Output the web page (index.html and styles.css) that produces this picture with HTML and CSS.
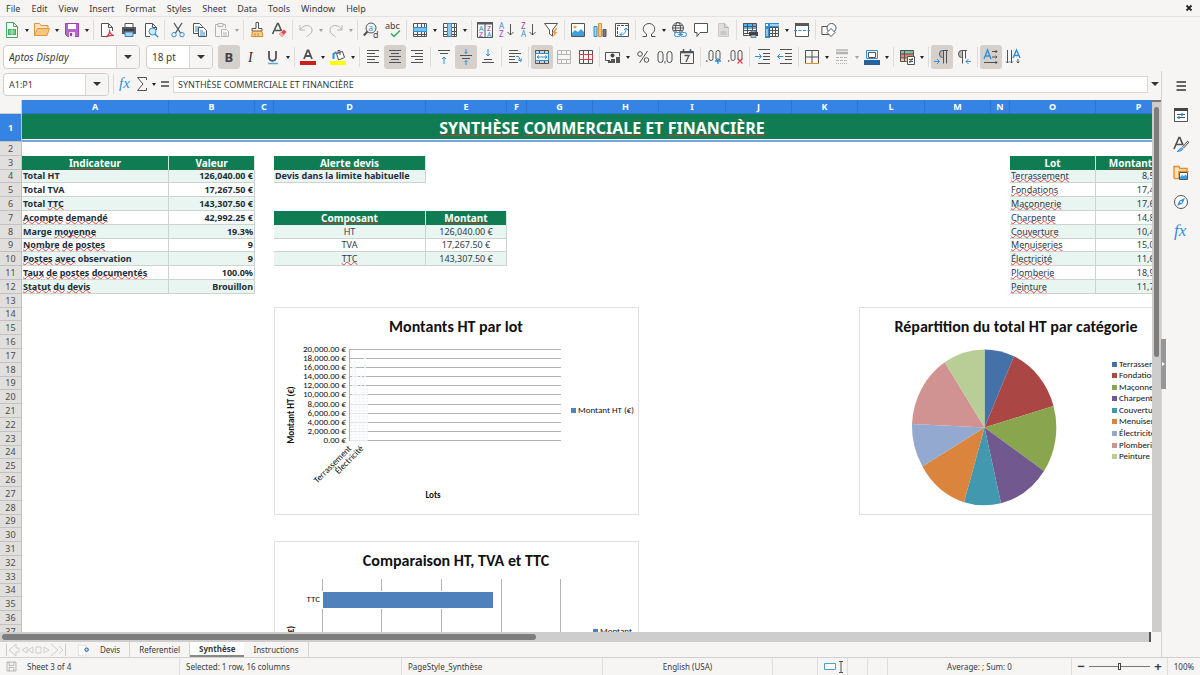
FILE: index.html
```html
<!DOCTYPE html>
<html lang="fr">
<head>
<meta charset="utf-8">
<title>Synthèse</title>
<link rel="stylesheet" href="styles.css">
</head>
<body>
<nav class="menubar">
  <button>File</button><button>Edit</button><button>View</button><button>Insert</button><button>Format</button><button>Styles</button><button>Sheet</button><button>Data</button><button>Tools</button><button>Window</button><button>Help</button>
  <button class="close" aria-label="Close document"><svg viewBox="0 0 8 8"><path d="M1.500 1.500l5 5M6.500 1.500l-5 5" stroke="#222" stroke-width="1.800"/></svg></button>
</nav>

<div class="toolbar standard">
  <button aria-label="New"><svg viewBox="0 0 16 16"><path class="k g" d="M2.500.500h7l4 4v11h-11z" fill="#fff"/><path class="k g" d="M9.500.500v4h4"/><path d="M4 7h8v6H4z" fill="#3fae5a"/><path d="M5 9h6M5 11h6M8 7v6" stroke="#d7f3de" stroke-width=".8"/></svg></button><button class="drop" aria-label="New options"></button>
  <button aria-label="Open"><svg viewBox="0 0 16 16"><path d="M.500 13.500v-12h5l1.500 2h7v3" fill="#fbe3bd" stroke="#d9933a"/><path d="M.500 13.500l3-7h12l-2.500 7z" fill="#f8c77c" stroke="#e09a3f"/></svg></button><button class="drop" aria-label="Open options"></button>
  <button aria-label="Save"><svg viewBox="0 0 16 16"><path d="M1.500 1.500h13v13H3.500l-2-2z" fill="#b566c9" stroke="#9a3fb0"/><path d="M4 2h8v5H4z" fill="#fff"/><path d="M5 10h6v5H5z" fill="#f3e5f7"/><path d="M6 11h2v3H6z" fill="#9a3fb0"/></svg></button><button class="drop" aria-label="Save options"></button>
  <i class="sep"></i>
  <button aria-label="Export as PDF"><svg viewBox="0 0 16 16"><path class="k" d="M8 14.500H2.500v-13h7l4 4V9" fill="#fff"/><path class="k" d="M9.500 1.500v4h4"/><path d="M7 15c3-2 4-5 3.500-7.500C10 10 12 13 15 13.500c-3-.5-6 .200-8 1.500z" fill="none" stroke="#d8344f" stroke-width="1.200"/></svg></button>
  <button aria-label="Print"><svg viewBox="0 0 16 16"><path d="M4 1.500h8V6H4z" fill="#fff" stroke="#555"/><path d="M1 5h14v7H1z" fill="#55595c"/><path d="M3 8h10" stroke="#222"/><path d="M4 10h8v4.500H4z" fill="#a9d4f3" stroke="#3c84b8"/></svg></button>
  <button aria-label="Print preview"><svg viewBox="0 0 16 16"><path class="k" d="M7 14.500H2.500v-13h7l4 4" fill="#fff"/><path class="k" d="M9.500 1.500v4h4V8"/><circle cx="9.500" cy="9.500" r="3.500" fill="#cfe7f9" stroke="#2f8fd6"/><path class="b" d="M12 12l3 3" stroke-width="1.500"/></svg></button>
  <i class="sep"></i>
  <button aria-label="Cut"><svg viewBox="0 0 16 16"><path class="k" d="M4 1l6.500 10M12 1L5.500 11" stroke-width="1.300"/><circle class="b" cx="4" cy="12.700" r="2.200"/><circle class="b" cx="12" cy="12.700" r="2.200"/></svg></button>
  <button aria-label="Copy"><svg viewBox="0 0 16 16"><path class="k" d="M1.500 1.500h6l3 3v7h-9z" fill="#fff"/><path class="b" d="M3 5h5M3 7h5M3 9h5"/><path class="k" d="M6.500 5.500h5l3 3v6h-8z" fill="#fff"/><path class="b" d="M8 9h3M8 11h5M8 13h5"/></svg></button>
  <button aria-label="Paste" class="off"><svg viewBox="0 0 16 16"><path class="k" d="M4 2.500H1.500v12H6M9 2.500h2.500V6M4 1.500h5v3H4z"/><path class="k" d="M7.500 7.500h5l2 2v5h-7z" fill="#ddd"/><path class="k" d="M9 11h4M9 13h4"/></svg></button><button class="drop off" aria-label="Paste options"></button>
  <i class="sep"></i>
  <button aria-label="Clone formatting"><svg viewBox="0 0 16 16"><path class="k" d="M7 .500h2.500v6H13v2.500H3V6.500h4z" fill="#fff"/><path d="M3.500 9.500h9.500l1 5H2.500z" fill="#f9cd8a" stroke="#e08a2c"/><path d="M6 11v3M9 11v3" stroke="#e08a2c"/></svg></button>
  <button aria-label="Clear formatting"><svg viewBox="0 0 16 16"><path class="k" d="M1.500 12L6.500 1.500h.8L10.500 9M4 8.500h6" stroke-width="1.600"/><path d="M8 12l5-4.500 2.500 2.500-4.500 5z" fill="#e24c4c"/><path d="M8 12l2-2 3 3-2 2z" fill="#f3aeb0"/></svg></button>
  <i class="sep"></i>
  <button aria-label="Undo" class="off"><svg viewBox="0 0 16 16"><path class="k" d="M2 3v5h5M2.500 7.500C5 3 11 2 13.500 6c2 4-2 7-5 8.500"/></svg></button><button class="drop off" aria-label="Undo list"></button>
  <button aria-label="Redo" class="off"><svg viewBox="0 0 16 16"><path class="k" d="M14 3v5H9M13.500 7.500C11 3 5 2 2.500 6c-2 4 2 7 5 8.500"/></svg></button><button class="drop off" aria-label="Redo list"></button>
  <i class="sep"></i>
  <button aria-label="Find and replace"><svg viewBox="0 0 16 16"><circle class="k" cx="8" cy="6" r="5"/><path class="k" d="M4.500 9.500L.800 13.500" stroke-width="2"/><text class="tb" x="5.500" y="8.500" font-size="8">a</text><text class="tk" x="10" y="15.500" font-size="9">d</text></svg></button>
  <button aria-label="Spelling"><svg viewBox="0 0 16 16"><text class="tk" x="0" y="7" font-size="9">abc</text><path d="M6 11.500l3 3 6-6" fill="none" stroke="#2fa866" stroke-width="1.500"/></svg></button>
  <i class="sep"></i>
  <button aria-label="Row"><svg viewBox="0 0 16 16"><path class="k" d="M1.500 1.500h13v13h-13zM1.500 12.500h13M5.500 1.500v13M9.500 1.500v13M12.500 1.500v13"/><path d="M1.500 5.500h13v4h-13z" fill="#7cc2f0" stroke="#2f8fd6"/></svg></button><button class="drop" aria-label="Row options"></button>
  <button aria-label="Column"><svg viewBox="0 0 16 16"><path class="k" d="M1.500 1.500h13v13h-13zM12.500 1.500v13M1.500 5.500h13M1.500 9.500h13M1.500 12.500h13"/><path d="M5.500 1.500h4v13h-4z" fill="#8dc8f1" stroke="#2f8fd6"/></svg></button><button class="drop" aria-label="Column options"></button>
  <i class="sep"></i>
  <button aria-label="Sort"><svg viewBox="0 0 16 16"><path class="k" d="M.500.500h15v15H.500zM8 2v13"/><path d="M0 0h16v2.500H0z" fill="#55595c"/><text class="tb" x="2" y="8.500" font-size="7">A</text><text class="tp" x="2" y="15" font-size="7">Z</text><text class="tp" x="10" y="8.500" font-size="7">Z</text><text class="tb" x="10" y="15" font-size="7">A</text></svg></button>
  <button aria-label="Sort ascending"><svg viewBox="0 0 16 16"><text class="tb" x="0" y="7" font-size="8">A</text><text class="tp" x="0" y="15" font-size="8">Z</text><path class="k" d="M11.500 2v11M8.500 10l3 3 3-3"/></svg></button>
  <button aria-label="Sort descending"><svg viewBox="0 0 16 16"><text class="tp" x="0" y="7" font-size="8">Z</text><text class="tb" x="0" y="15" font-size="8">A</text><path class="k" d="M11.500 2v11M8.500 10l3 3 3-3"/></svg></button>
  <button aria-label="AutoFilter"><svg viewBox="0 0 16 16"><path class="k" d="M1.500 1.500h13L9.500 8v6l-3-2V8z" fill="#fff"/><path d="M13 6l-4 5h2.500L9 16l5.500-6H12l2.500-4z" fill="#f0953a"/></svg></button>
  <i class="sep"></i>
  <button aria-label="Insert image"><svg viewBox="0 0 16 16"><path class="k" d="M1.500 1.500h13v13h-13z" fill="#fff"/><path d="M2 14v-3l3-3 3 2 3-3 3 3v4z" fill="#3d9fe0"/><circle cx="5" cy="5" r="1.500" fill="#f2a444"/></svg></button>
  <button aria-label="Insert chart"><svg viewBox="0 0 16 16"><path d="M2 4.500h3v10H2z" fill="#9fd0f2" stroke="#2f8fd6"/><path d="M6.500 1.500h3v13h-3z" fill="#f9c784" stroke="#e58f2c"/><path d="M11 7.500h3v7h-3z" fill="#777" stroke="#555"/></svg></button>
  <button aria-label="Pivot table"><svg viewBox="0 0 16 16"><path class="k" d="M1.500 1.500h13v13h-13z" fill="#fff"/><path class="k" d="M3 3.500h11M3.500 5v9" stroke-dasharray="3 1"/><path class="b" d="M6 12.500c4 .5 6-2 6-6M10 8l2-2 2 2M8 10.500l-2 2 2 2"/></svg></button>
  <i class="sep"></i>
  <button aria-label="Special character"><svg viewBox="0 0 16 16"><path class="k" d="M1.500 14.500h4v-2.500C0 9 2 1.500 8 1.500s8 7.500 2.500 10.500v2.500h4"/></svg></button><button class="drop" aria-label="Special characters list"></button>
  <button aria-label="Hyperlink"><svg viewBox="0 0 16 16"><circle class="k" cx="7" cy="6" r="5.500"/><ellipse class="k" cx="7" cy="6" rx="2.500" ry="5.500"/><path class="k" d="M1.500 6h11M2.500 3.500h9M2.500 8.500h9"/><rect x="3.500" y="10.500" width="6" height="4" rx="2" fill="#f6f5f4" stroke="#2f8fd6"/><rect x="9.500" y="10.500" width="6" height="4" rx="2" fill="#f6f5f4" stroke="#2f8fd6"/><path class="b" d="M7 12.500h5"/></svg></button>
  <button aria-label="Comment"><svg viewBox="0 0 16 16"><path class="k" d="M1.500 1.500h13v9H7l-3 4v-4H1.500z" fill="#fff"/></svg></button>
  <button aria-label="Headers and footers" class="off"><svg viewBox="0 0 16 16"><path d="M3.500 1.500h6l4 4v9h-10z" fill="#bbb" stroke="#888"/><path class="k" d="M9.500 1.500v4h4M5.500 10h6M5.500 12h6"/></svg></button>
  <i class="sep"></i>
  <button aria-label="Define print area"><svg viewBox="0 0 16 16"><path d="M1 1h13v6H1z" fill="#5db2ec"/><path class="k" d="M1.500 1.500h13v10h-13zM1.500 4.500h13M1.500 8.500h13M5.500 1.500v10M10.500 1.500v10M1.500 11.500v2h5"/><path d="M7 10h9v4H7z" fill="#444"/><path d="M9 8.500h5V10H9zM9 13h5v2.500H9z" fill="#9fd0f2" stroke="#444" stroke-width=".6"/></svg></button>
  <button aria-label="Freeze rows and columns"><svg viewBox="0 0 16 16"><path d="M1 1h14v4H6v11H1z" fill="#2f8fd6"/><path class="k" d="M5.500 5.500h9v9h-9zM5.500 8.500h9M5.500 11.500h9M8.500 5.500v9M11.500 5.500v9"/><path d="M6 2h9v2H6z" fill="#9fd0f2"/><path d="M2 2l2 2M4 2L2 4M3 7v7" stroke="#fff"/></svg></button><button class="drop" aria-label="Freeze options"></button>
  <button aria-label="Split window"><svg viewBox="0 0 16 16"><path class="k" d="M1.500 1.500h13v13h-13z" fill="#fff"/><path d="M1 1h14v3H1z" fill="#55595c"/><path class="b" d="M0 8.500h16" stroke-dasharray="3 1.500"/></svg></button>
  <i class="sep"></i>
  <button aria-label="Draw functions"><svg viewBox="0 0 16 16"><path class="k" d="M.900 4.500h8v8h-8z" fill="#fff"/><circle class="k" cx="10.500" cy="6" r="4.500" fill="#f6f5f4"/><path class="k" d="M10 6.500l4 4-4 4-4-4z" fill="#fff"/></svg></button>
</div>

<div class="toolbar formatting">
  <div class="combo font-name"><input aria-label="Font name" value="Aptos Display"><button class="open" aria-label="Font list"></button></div>
  <div class="combo font-size"><input aria-label="Font size" value="18 pt"><button class="open" aria-label="Size list"></button></div>
  <button class="on" aria-label="Bold"><svg viewBox="0 0 16 16"><text class="tk" x="3.500" y="13" font-size="13" font-weight="700">B</text></svg></button>
  <button aria-label="Italic"><svg viewBox="0 0 16 16"><text x="5" y="13" font-size="14" font-style="italic" font-family="Liberation Serif, serif" fill="#333">I</text></svg></button>
  <button aria-label="Underline"><svg viewBox="0 0 16 16"><path class="k" d="M4 2v6c0 5 7 5 7 0V2" stroke-width="1.800"/><path d="M3 14.500h10" stroke="#5aa9dd" stroke-width="1.500"/></svg></button><button class="drop" aria-label="Underline styles"></button>
  <i class="sep"></i>
  <button aria-label="Font color"><svg viewBox="0 0 16 16"><path class="k" d="M4 10L7.500 1.500h1L12 10M5.500 7h5" stroke-width="1.800"/><path d="M0 12h16v4H0z" fill="#c9211e"/></svg></button><button class="drop" aria-label="Font colors"></button>
  <button aria-label="Highlighting color"><svg viewBox="0 0 16 16"><path class="k" d="M6.500 4.500l6-2 2 6-6 2.500zM8 5V1.500h2V6" fill="#fff"/><path d="M3.500 10V5l3-2" fill="none" stroke="#2f8fd6" stroke-width="2"/><path d="M0 12h16v4H0z" fill="#ffff00"/></svg></button><button class="drop" aria-label="Highlighting colors"></button>
  <i class="sep"></i>
  <button aria-label="Align left"><svg viewBox="0 0 16 16"><path class="k" d="M2 1.500h12M2 4.500h8M2 7.500h12M2 10.500h8M2 13.500h12"/></svg></button>
  <button class="on" aria-label="Align center"><svg viewBox="0 0 16 16"><path class="k" d="M2 1.500h12M4 4.500h8M2 7.500h12M4 10.500h8M2 13.500h12"/></svg></button>
  <button aria-label="Align right"><svg viewBox="0 0 16 16"><path class="k" d="M2 1.500h12M6 4.500h8M2 7.500h12M6 10.500h8M2 13.500h12"/></svg></button>
  <i class="sep"></i>
  <button aria-label="Align top"><svg viewBox="0 0 16 16"><path class="k" d="M2 1.500h12M4 4.500h8"/><path class="b" d="M8 15V8M6 10l2-2 2 2"/></svg></button>
  <button class="on" aria-label="Center vertically"><svg viewBox="0 0 16 16"><path class="k" d="M2 6.500h12M4 9.500h8"/><path class="b" d="M8 0v4.500M6.500 3L8 4.500 9.500 3M8 16v-4.500M6.500 13L8 11.500 9.500 13"/></svg></button>
  <button aria-label="Align bottom"><svg viewBox="0 0 16 16"><path class="k" d="M2 13.500h12M4 10.500h8"/><path class="b" d="M8 0v7M6 5l2 2 2-2"/></svg></button>
  <i class="sep"></i>
  <button aria-label="Wrap text"><svg viewBox="0 0 16 16"><path class="k" d="M2 1.500h9M2 4.500h12M2 7.500h6M2 10.500h6M2 13.500h9"/><path class="b" d="M9 7.500h2.500l2 4M11 10.500l3 2 .500-3"/></svg></button>
  <i class="sep"></i>
  <button class="on" aria-label="Merge and center cells"><svg viewBox="0 0 16 16"><path class="k" d="M1.500 1.500h13v13h-13zM5.500 1.500v3M10.500 1.500v3M5.500 11.500v3M10.500 11.500v3"/><path d="M1.500 4.500h13v7h-13z" fill="#fff" stroke="#2f8fd6"/><path class="b" d="M3 8h10M5 6.500L3 8l2 1.500M11 6.500L13 8l-2 1.500"/></svg></button>
  <button class="off" aria-label="Merge cells"><svg viewBox="0 0 16 16"><path class="k" d="M1.500 1.500h13v13h-13zM1.500 5.500h13M1.500 10.500h13M5.500 1.500v4M10.500 1.500v4M5.500 10.500v4M10.500 10.500v4"/></svg></button>
  <button aria-label="Unmerge cells"><svg viewBox="0 0 16 16"><path class="k" d="M1.500 1.500h13v13h-13zM5.500 1.500v4M10.500 1.500v4M5.500 11v4M10.500 11v4"/><path d="M1.500 5.500h13v5h-13zM5.500 5.500v5M10.500 5.500v5" fill="none" stroke="#da3b45"/></svg></button>
  <i class="sep"></i>
  <button aria-label="Currency"><svg viewBox="0 0 16 16"><path class="k" d="M5 11.500H.500v-8h14v4"/><circle cx="7.500" cy="6.500" r="2" fill="#444"/><path d="M6 10h4v4H6zM11 8h4v6h-4zM3 12h3v2H3z" fill="#555"/></svg></button><button class="drop" aria-label="Currency list"></button>
  <button aria-label="Percent"><svg viewBox="0 0 16 16"><circle class="k" cx="5" cy="5" r="2.300"/><circle class="k" cx="11.500" cy="11" r="2.300"/><path class="k" d="M12.500 2l-8 12"/></svg></button>
  <button aria-label="Number"><svg viewBox="0 0 16 16"><rect class="k" x="1" y="2.500" width="5" height="11" rx="2.500"/><rect class="k" x="10" y="2.500" width="5" height="11" rx="2.500"/><path class="k" d="M8 12v2.500"/></svg></button>
  <button aria-label="Date"><svg viewBox="0 0 16 16"><path class="k" d="M1.500 2.500h13v12h-13z"/><path class="k" d="M1 3.500h14M4.500 0v3M11.500 0v3" stroke-width="1.500"/><path class="k" d="M5.500 6.500H10l-3 6.500" stroke-width="1.300"/></svg></button>
  <i class="sep"></i>
  <button aria-label="Add decimal place"><svg viewBox="0 0 16 16"><path class="k" d="M.800 11v2"/><rect class="k" x="3" y="1.500" width="4" height="10" rx="2"/><rect class="k" x="10" y="1.500" width="4" height="10" rx="2"/><path class="b" d="M12 9v6M9 12h6" stroke-width="1.300"/></svg></button>
  <button aria-label="Delete decimal place"><svg viewBox="0 0 16 16"><path class="k" d="M.800 11v2"/><rect class="k" x="3" y="1.500" width="4" height="10" rx="2"/><rect class="k" x="10" y="1.500" width="4" height="10" rx="2"/><path d="M9.500 9.500l5 5M14.500 9.500l-5 5" stroke="#e0434b" stroke-width="1.300"/></svg></button>
  <i class="sep"></i>
  <button aria-label="Increase indent"><svg viewBox="0 0 16 16"><path class="k" d="M3 .500h12M8 4.500h7M8 7.500h7M8 10.500h7M3 14.500h12"/><path class="b" d="M0 7.500h6M4 5l2.500 2.500L4 10"/></svg></button>
  <button aria-label="Decrease indent"><svg viewBox="0 0 16 16"><path class="k" d="M3 .500h12M8 4.500h7M8 7.500h7M8 10.500h7M3 14.500h12"/><path class="b" d="M.500 7.500h6M3 5L.500 7.500 3 10"/></svg></button>
  <i class="sep"></i>
  <button aria-label="Borders"><svg viewBox="0 0 16 16"><path class="k" d="M1.500 14V1.500h13V14M8 1.500V14M1.500 8h13"/><path d="M1 14.500h14" stroke="#e58f2c"/></svg></button><button class="drop" aria-label="Borders list"></button>
  <button class="off" aria-label="Border style"><svg viewBox="0 0 16 16"><path class="k" d="M2 1h12" stroke-width="1.500"/><path class="k" d="M2 4h12" stroke-width="2.500"/><path class="k" d="M2 8.500h12M2 11.500h12" stroke-dasharray="3 1"/><path class="k" d="M2 14.500h12" stroke-dasharray="1 1"/></svg></button><button class="drop off" aria-label="Border styles"></button>
  <button aria-label="Border color"><svg viewBox="0 0 16 16"><path class="b" d="M2.500 1.500h11v8h-11z"/><path class="k" d="M4.500 3.500h7v5h-7z" fill="#fff"/><path d="M0 11h16v5H0z" fill="#2a6099"/></svg></button><button class="drop" aria-label="Border colors"></button>
  <i class="sep"></i>
  <button aria-label="Conditional formatting"><svg viewBox="0 0 16 16"><path d="M1 1h13v4H1z" fill="#7cc58a"/><path d="M1 5h13v4H1z" fill="#eb7d7d"/><path d="M1 9h8v4H1z" fill="#f9c784"/><path class="k" d="M1.500 1.500h13v8M1.500 1.500v11h6M1.500 5h13M1.500 9h6M5.500 1.500v11"/><path class="k" d="M8.500 7.500h7v8h-7z" fill="#fff"/><path class="k" d="M10 10.500h4M10 12.500h4M13.500 9l-3 5"/></svg></button><button class="drop" aria-label="Conditional formatting list"></button>
  <i class="sep"></i>
  <button class="on" aria-label="Left to right"><svg viewBox="0 0 16 16"><path d="M9 1a3 3.500 0 0 0 0 8z" fill="#bbb"/><path class="k" d="M14 1.500H8.500a3 3.500 0 0 0 0 7M9.500 1.500v13M12.500 1.500v13"/><path class="b" d="M0 12.500h5M3 10l2.500 2.500L3 15"/></svg></button>
  <button aria-label="Right to left"><svg viewBox="0 0 16 16"><path d="M6 1a3 3.500 0 0 0 0 8z" fill="#bbb"/><path class="k" d="M11 1.500H5.500a3 3.500 0 0 0 0 7M6.500 1.500v13M9.500 1.500v8"/><path class="b" d="M10 12.500h5M12.500 10L10 12.500l2.500 2.500"/></svg></button>
  <i class="sep"></i>
  <button class="on" aria-label="Text direction from left to right"><svg viewBox="0 0 16 16"><path class="b" d="M1 10L4.500 1 8 10M2.500 7h4" stroke-width="1.400"/><path class="k" d="M9 2.500h5M12.500 1L14 2.500 12.500 4M9 8h5M12.500 6.500L14 8l-1.500 1.500M1 13.500h13M12.500 12l1.500 1.500-1.500 1.500"/></svg></button>
  <button aria-label="Text direction from top to bottom"><svg viewBox="0 0 16 16"><path class="b" d="M8 9l3.500-8L15 9M9.500 6.500h4" stroke-width="1.400"/><path class="k" d="M2.500 1v13M1 12.500L2.500 14 4 12.500M6.500 1v13M5 12.500L6.500 14 8 12.500M13 10v4M11.500 12.500L13 14l1.500-1.500"/></svg></button>
</div>

<main class="work">
  <section class="document">
    <div class="formula-bar">
      <div class="combo name-box"><input aria-label="Name box" value="A1:P1"><button class="open" aria-label="Named ranges"></button></div>
      <i class="sep"></i>
      <button class="tool" aria-label="Function wizard"><svg viewBox="0 0 16 16"><text class="fx" x="1" y="12" font-size="15">fx</text></svg></button>
      <button class="tool sum" aria-label="Select function"><svg viewBox="0 0 16 16"><path class="k" d="M12.500 4V1.500h-9L9 8l-5.500 6.500h9V12"/></svg></button><button class="drop" aria-label="Functions"></button>
      <button class="tool equals" aria-label="Formula"><svg viewBox="0 0 16 16"><path d="M4 6h8M4 10h8" stroke="#444" stroke-width="1.500"/></svg></button>
      <input class="formula" aria-label="Formula input" value="SYNTHÈSE COMMERCIALE ET FINANCIÈRE">
      <button class="drop expand" aria-label="Expand formula bar"></button>
    </div>

    <div class="viewport">
      <div class="sheet">
        <table>
          <colgroup><col class="w-head"><col class="w-a"><col class="w-key"><col class="w-gap"><col class="w-d"><col class="w-e"><col class="w-f"><col class="w-std"><col class="w-std"><col class="w-wide"><col class="w-std"><col class="w-std"><col class="w-wide"><col class="w-std"><col class="w-gap"><col class="w-key"><col class="w-key"></colgroup>
          <thead><tr><th class="corner"></th><th>A</th><th>B</th><th>C</th><th>D</th><th>E</th><th>F</th><th>G</th><th>H</th><th>I</th><th>J</th><th>K</th><th>L</th><th>M</th><th>N</th><th>O</th><th>P</th></tr></thead>
          <tbody>
            <tr class="title"><th>1</th><td colspan="16"><u>SYNTHÈSE</u> <u>COMMERCIALE</u> ET <u>FINANCIÈRE</u></td></tr>
            <tr><th>2</th></tr>
            <tr><th>3</th><td class="h"><u>Indicateur</u></td><td class="h"><u>Valeur</u></td><td></td><td class="h"><u>Alerte</u> <u>devis</u></td><td colspan="10"></td><td class="h">Lot</td><td class="h"><u>Montant</u> HT</td></tr>
            <tr class="tint"><th>4</th><td class="c s">Total HT</td><td class="c s n">126,040.00 €</td><td></td><td class="c s">Devis dans la limite habituelle</td><td colspan="10"></td><td class="c"><u>Terrassement</u></td><td class="c n">8,540.0 €</td></tr>
            <tr><th>5</th><td class="c s">Total TVA</td><td class="c s n">17,267.50 €</td><td colspan="12"></td><td class="c"><u>Fondations</u></td><td class="c n">17,450.0 €</td></tr>
            <tr class="tint"><th>6</th><td class="c s">Total <u>TTC</u></td><td class="c s n">143,307.50 €</td><td colspan="12"></td><td class="c"><u>Maçonnerie</u></td><td class="c n">17,600.0 €</td></tr>
            <tr><th>7</th><td class="c s"><u>Acompte</u> <u>demandé</u></td><td class="c s n">42,992.25 €</td><td></td><td class="h"><u>Composant</u></td><td class="h"><u>Montant</u></td><td colspan="9"></td><td class="c"><u>Charpente</u></td><td class="c n">14,800.0 €</td></tr>
            <tr class="tint"><th>8</th><td class="c s">Marge <u>moyenne</u></td><td class="c s n">19.3%</td><td></td><td class="c m">HT</td><td class="c m">126,040.00 €</td><td colspan="9"></td><td class="c"><u>Couverture</u></td><td class="c n">10,400.0 €</td></tr>
            <tr><th>9</th><td class="c s"><u>Nombre</u> <u>de</u> <u>postes</u></td><td class="c s n">9</td><td></td><td class="c m">TVA</td><td class="c m">17,267.50 €</td><td colspan="9"></td><td class="c"><u>Menuiseries</u></td><td class="c n">15,000.0 €</td></tr>
            <tr class="tint"><th>10</th><td class="c s"><u>Postes</u> <u>avec</u> observation</td><td class="c s n">9</td><td></td><td class="c m"><u>TTC</u></td><td class="c m">143,307.50 €</td><td colspan="9"></td><td class="c"><u>Électricité</u></td><td class="c n">11,600.0 €</td></tr>
            <tr><th>11</th><td class="c s"><u>Taux</u> <u>de</u> <u>postes</u> <u>documentés</u></td><td class="c s n">100.0%</td><td colspan="12"></td><td class="c"><u>Plomberie</u></td><td class="c n">18,900.0 €</td></tr>
            <tr class="tint"><th>12</th><td class="c s"><u>Statut</u> <u>du</u> <u>devis</u></td><td class="c s n">Brouillon</td><td colspan="12"></td><td class="c"><u>Peinture</u></td><td class="c n">11,750.0 €</td></tr>
            <tr><th>13</th></tr><tr><th>14</th></tr><tr><th>15</th></tr><tr><th>16</th></tr><tr><th>17</th></tr><tr><th>18</th></tr><tr><th>19</th></tr><tr><th>20</th></tr><tr><th>21</th></tr><tr><th>22</th></tr><tr><th>23</th></tr><tr><th>24</th></tr><tr><th>25</th></tr><tr><th>26</th></tr><tr><th>27</th></tr><tr><th>28</th></tr><tr><th>29</th></tr><tr><th>30</th></tr><tr><th>31</th></tr><tr><th>32</th></tr><tr><th>33</th></tr><tr><th>34</th></tr><tr><th>35</th></tr><tr><th>36</th></tr><tr><th>37</th></tr>
          </tbody>
        </table>

        <svg class="chart by-lot" viewBox="0 0 365 208" width="365" height="208">
          <rect class="frame" x=".5" y=".5" width="364" height="207"/>
          <text class="chart-title" x="182" y="25">Montants HT par lot</text>
          <path class="grid" d="M75 42.500h212M75 51.500h212M75 60.500h212M75 69.500h212M75 78.500h212M75 87.500h212M75 97.500h212M75 106.500h212M75 115.500h212M75 124.500h212M75 133.500h212M75.500 42v92"/>
          <path d="M77 134V95M79 134V54M81 134V53M83 134V66M85 134V86M87 134V65M89 134V81M91 134V47M93 134V80" stroke="#f8fafb" stroke-width="1.500"/>
          <path d="M77.500 134V95M81.500 134V53M85.500 134V86M89.500 134V65M93.500 134V80" stroke="#d5dcdf" stroke-width=".5" stroke-dasharray="1 2"/>
          <g class="end"><text x="72" y="45">20,000.00 €</text><text x="72" y="54">18,000.00 €</text><text x="72" y="63">16,000.00 €</text><text x="72" y="72">14,000.00 €</text><text x="72" y="81">12,000.00 €</text><text x="72" y="90">10,000.00 €</text><text x="72" y="100">8,000.00 €</text><text x="72" y="109">6,000.00 €</text><text x="72" y="118">4,000.00 €</text><text x="72" y="127">2,000.00 €</text><text x="72" y="136">0.00 €</text>
          <text transform="translate(78 142) rotate(-45)">Terrassement</text><text transform="translate(90 142) rotate(-45)">Électricité</text></g>
          <text class="axis" transform="translate(20 108) rotate(-90)">Montant HT (€)</text>
          <text class="axis" x="159" y="191">Lots</text>
          <path d="M297 101h5v5h-5z" fill="#4f81bd"/><text x="304" y="106">Montant HT (€)</text>
        </svg>

        <svg class="chart by-category" viewBox="0 0 314 208" width="314" height="208">
          <rect class="frame" x=".5" y=".5" width="313" height="207"/>
          <text class="chart-title" x="157" y="25">Répartition du total HT par catégorie</text>
          <g transform="translate(-859 -308)">
            <path fill="#4472a8" d="M984.500 428.500V350.500A72.500 78 0 0 1 1014 357.300z"/>
            <path fill="#aa4643" d="M984.500 428.500L1014 357.300A72.500 78 0 0 1 1053.500 407z"/>
            <path fill="#89a54e" d="M984.500 428.500L1053.500 407A72.500 78 0 0 1 1044 472z"/>
            <path fill="#71588f" d="M984.500 428.500L1044 472A72.500 78 0 0 1 1001 504.200z"/>
            <path fill="#4198af" d="M984.500 428.500L1001 504.200A72.500 78 0 0 1 964 503.200z"/>
            <path fill="#db843d" d="M984.500 428.500L964 503.200A72.500 78 0 0 1 922.500 467.500z"/>
            <path fill="#93a9cf" d="M984.500 428.500L922.500 467.500A72.500 78 0 0 1 912 425z"/>
            <path fill="#d19392" d="M984.500 428.500L912 425A72.500 78 0 0 1 944.700 363.300z"/>
            <path fill="#b9cd96" d="M984.500 428.500L944.700 363.300A72.500 78 0 0 1 984.500 350.500z"/>
          </g>
          <path fill="#4472a8" d="M253 55h5v5h-5z"/><path fill="#aa4643" d="M253 66h5v5h-5z"/><path fill="#89a54e" d="M253 78h5v5h-5z"/><path fill="#71588f" d="M253 89h5v5h-5z"/><path fill="#4198af" d="M253 101h5v5h-5z"/><path fill="#db843d" d="M253 112h5v5h-5z"/><path fill="#93a9cf" d="M253 124h5v5h-5z"/><path fill="#d19392" d="M253 136h5v5h-5z"/><path fill="#b9cd96" d="M253 147h5v5h-5z"/>
          <text x="260" y="60">Terrassement</text><text x="260" y="71">Fondations</text><text x="260" y="83">Maçonnerie</text><text x="260" y="94">Charpente</text><text x="260" y="106">Couverture</text><text x="260" y="117">Menuiseries</text><text x="260" y="129">Électricité</text><text x="260" y="141">Plomberie</text><text x="260" y="152">Peinture</text>
        </svg>

        <svg class="chart totals" viewBox="0 0 365 208" width="365" height="208">
          <rect class="frame" x=".5" y=".5" width="364" height="207"/>
          <text class="chart-title" x="182" y="25">Comparaison HT, TVA et TTC</text>
          <path class="grid" d="M48.500 38v170M107.500 38v170M167.500 38v170M227.500 38v170M286.500 38v170"/>
          <path d="M48 50h171v18H48z" fill="#fff"/><path d="M49 51h170v16H49z" fill="#4f81bd"/>
          <text class="right" x="46" y="61">TTC</text>
          <text class="right bold" transform="translate(20 85) rotate(-90)">Montant (€)</text>
          <path d="M319 88h5v5h-5z" fill="#4f81bd"/><text x="326" y="93">Montant</text>
        </svg>
      </div>
      <div class="vscroll"><span></span></div>
    </div>
    <div class="hscroll"><span></span></div>

    <div class="tabs">
      <svg class="tab-nav" viewBox="0 0 62 14"><path d="M1.500 1v12M11 1L4 7l7 6V9h3V5h-3zM22 4l-5 3 5 3zM28 4l-5 3 5 3zM31 4h5v6h-5zM39 4l5 3-5 3zM46 1l7 6-7 6M54 3l4 4-4 4M60.500 1v12" fill="none" stroke="#cfcdca"/></svg>
      <button class="add" aria-label="Add sheet"><svg viewBox="0 0 16 16"><path d="M1.500 2.500h9v12h-9z" fill="#fff" stroke="#ddd"/><circle cx="11" cy="7.500" r="2.500" fill="#2a6fb8"/><path d="M11 6v3M9.500 7.500h3" stroke="#fff" stroke-width=".8"/></svg></button>
      <button>Devis</button><button>Referentiel</button><button class="current">Synthèse</button><button>Instructions</button>
    </div>
  </section>

  <aside class="sidebar">
    <button class="handle" aria-label="Hide sidebar"></button>
    <button aria-label="Sidebar settings"><svg viewBox="0 0 16 16"><path d="M3.500 4h9.500M3.500 8h9.500M3.500 12h9.500" stroke="#333" stroke-width="1.600"/></svg></button>
    <button aria-label="Properties"><svg viewBox="0 0 16 16"><path class="k" d="M1.500 1.500h13v13h-13z" fill="#fff"/><path d="M1 1h14v3H1z" fill="#444"/><path class="k" d="M4 7.500h8M4 10.500h8"/><path class="b" d="M9 6v3M6 9v3" stroke-width="1.500"/></svg></button>
    <button aria-label="Styles"><svg viewBox="0 0 16 16"><path class="k" d="M1 13L6 1.500h.8L10 9M3 8.500h6" stroke-width="1.700"/><path class="k" d="M15.500 5.500l-5.500 6" stroke-width="2.500"/><path d="M15 6l-5 5.500" stroke="#fff"/><path d="M4 15.500c2 0 2-3.500 4.500-3.500s2 3-4.500 3.500z" fill="#79bdf0" stroke="#2f8fd6"/></svg></button>
    <button aria-label="Gallery"><svg viewBox="0 0 16 16"><path d="M1 13.500v-12h5l1 2h7v3" fill="#fbe3bd" stroke="#e58f2c" stroke-width="1.400"/><path d="M1 13.500h5v-7h9.500" fill="none" stroke="#e58f2c" stroke-width="1.400"/><path class="k" d="M6.500 7.500h8v7h-8z" fill="#fff"/><path d="M7 14v-2l2-2 2 1 1.500-1.500L14 11v3z" fill="#3d9fe0"/></svg></button>
    <button aria-label="Navigator"><svg viewBox="0 0 16 16"><circle class="k" cx="8" cy="8" r="6.500" fill="#fff"/><path d="M12 4l-2.500 5.500L4 12l2.500-5.500z" fill="#2f8fd6"/><circle cx="8" cy="8" r="1" fill="#fff"/></svg></button>
    <button aria-label="Functions"><svg viewBox="0 0 16 16"><text class="fx" x="1" y="13" font-size="17">fx</text></svg></button>
  </aside>
</main>

<footer class="status">
  <div><svg class="saved" viewBox="0 0 16 16"><path d="M1.500 1.500h13v13h-13zM4.500 1.500v5h7v-5M4.500 14.500v-5h7v5" fill="none" stroke="#999"/></svg><span>Sheet 3 of 4</span></div>
  <div>Selected: 1 row, 16 columns</div>
  <div>PageStyle_Synthèse</div>
  <div class="mid">English (USA)</div>
  <div></div>
  <div class="mode"><svg viewBox="0 0 20 12"><path d="M.500 2.500h11v6H.500z" fill="#fff" stroke="#4a9fd6"/><path class="k" d="M15 .500h4M15 11.500h4M17 .500v11"/></svg></div>
  <div></div><div></div>
  <div class="mid">Average: ; Sum: 0</div>
  <div class="zoom"><button aria-label="Zoom out">−</button><input type="range" aria-label="Zoom" min="0" max="200" value="100"><button aria-label="Zoom in">+</button></div>
  <div class="mid">100%</div>
</footer>
</body>
</html>
```
FILE: styles.css
```css
* { box-sizing: border-box; }
html, body { height: 100%; margin: 0; }
body {
  display: flex; flex-direction: column; overflow: hidden;
  background: #f6f5f4; color: #3a3a3a;
  font: 9px/13px "Noto Sans", "Open Sans", sans-serif;
}
button, input { font: inherit; color: inherit; border: 0; padding: 0; margin: 0; background: none; min-width: 0; }
button { display: flex; align-items: center; justify-content: center; }
svg { display: block; }
button svg { overflow: visible; }
.k { stroke: #505356; fill: none; }
.b { stroke: #2f8fd6; fill: none; }
.k[fill] { fill: #fff; }
.g { stroke: #3fae5a; }
.tk { fill: #3f4245; }
.tb { fill: #2f8fd6; }
.tp { fill: #a63fb5; }
.fx { fill: #2f8fd6; font-family: "Liberation Serif", serif; font-style: italic; }

.menubar { display: flex; flex: none; height: 17px; border-bottom: 1px solid #e4e2e0; font-size: 9px; }
.menubar button { padding: 0 5px 0 6px; }
.menubar .close { margin-left: auto; padding-right: 7px; }
.close svg { width: 8px; height: 8px; }

.toolbar { display: flex; flex: none; align-items: center; }
.toolbar button { flex: none; width: 22px; height: 24px; }
.toolbar svg, .tool svg, .sidebar svg { width: 16px; height: 16px; }
.standard { height: 26px; padding-left: 1px; }
.formatting { height: 28px; padding-left: 3px; }
.toolbar .on { background: #d5d0cc; border-radius: 3px; }
.off { opacity: .4; }
.sep { flex: none; width: 1px; height: 20px; margin: 0 2px; background: #dedcda; }
.toolbar .drop { width: 8px; }
.drop::after { content: ""; border: 2px solid transparent; border-top: 3px solid #222; border-bottom: 0; }

.combo { display: flex; flex: none; height: 24px; background: #fff; border: 1px solid #cfccc9; border-radius: 4px; overflow: hidden; }
.combo input { flex: 1; padding: 0 5px; }
.combo .open { width: 23px; height: 100%; background: #f6f5f4; border-left: 1px solid #dad7d4; }
.open::after { content: ""; border: 4px solid transparent; border-top: 4px solid #333; border-bottom: 0; }
.font-name { width: 137px; margin-right: 6px; font-size: 10px; }
.font-name input { font-style: italic; }
.font-size { width: 67px; margin-right: 5px; font-size: 10px; }

.work { display: flex; flex: 1; min-height: 0; }
.document { display: flex; flex-direction: column; flex: 1; min-width: 0; }
.formula-bar { display: flex; flex: none; align-items: center; height: 29px; padding: 0 2px 3px 3px; }
.name-box { width: 106px; height: 23px; margin-right: 2px; }
.tool { width: 16px; height: 20px; margin-left: 2px; }
.sum { width: 15px; margin-left: 0; }
.formula-bar .drop { width: 9px; }
.equals { width: 14px; margin-left: 0; }
.formula { flex: 1; height: 17px; margin: 0 2px 0 1px; padding: 0 4px; background: #fff; border: 1px solid #dad8d6; font-size: 9px; }
.drop.expand::after { border: 4px solid transparent; border-top: 4px solid #333; border-bottom: 0; }

.viewport { display: flex; flex: 1; min-height: 0; }
.sheet { position: relative; flex: 1; min-width: 0; overflow: hidden; background: #fff; }
table { width: 1182px; table-layout: fixed; border-collapse: separate; border-spacing: 0; color: #2b3d49; }
.w-head { width: 22px; } .w-a { width: 147px; } .w-key { width: 86px; } .w-gap { width: 19px; }
.w-d { width: 152px; } .w-e { width: 81px; } .w-f { width: 20px; } .w-std { width: 66px; } .w-wide { width: 67px; }
tr { height: 14px; }
tbody tr:nth-child(5n+4) { height: 13px; }
th, td { padding: 0 1px; line-height: 12px; white-space: nowrap; text-align: left; }
th { text-align: center; }
thead th { background: #3584e4; color: #fff; border-right: 1px solid #2c74cc; border-bottom: 1px solid #2c74cc; font-size: 9px; }
thead .corner { background: #f6f5f4; border-color: #cfcdca; }
tbody th { background: #e0dfdd; color: #4c4c4c; font-weight: 400; border-right: 1px solid #c4c2c0; border-bottom: 1px solid #c4c2c0; }
.title { height: 28px; }
.title th { background: #3584e4; color: #fff; font-weight: 700; }
.title td { background: #0f7c53; color: #fff; font-size: 16px; font-weight: 700; line-height: 24px; text-align: center; box-shadow: inset 0 -2px #74a5dc, inset 0 -3px #fff; }
.h { background: #0f7c53; color: #fff; font-size: 10px; font-weight: 700; text-align: center; border-right: 1px solid #d5e5de; }
.c { border-right: 1px solid #ccd3d0; border-bottom: 1px solid #ccd3d0; }
.tint .c { background: #e9f5f0; }
.s { font-weight: 700; color: #1f2d3a; }
.n { text-align: right; }
.m { text-align: center; }
u { text-decoration: underline wavy #dc4a45 1px; text-underline-offset: -1px; text-decoration-skip-ink: none; }
.title u, .h u { text-decoration: underline solid #a8442f 1px; text-underline-offset: 1px; }

.chart { position: absolute; background: #fff; font: 9px Carlito, Lato, sans-serif; fill: #111; }
.by-lot { left: 274px; top: 207px; }
.by-category { left: 859px; top: 207px; }
.totals { left: 274px; top: 441px; }
.frame { fill: #fff; stroke: #e0e0e0; }
.grid { fill: none; stroke: #b3b3b3; }
.chart-title { font-size: 16px; font-weight: 700; text-anchor: middle; }
.end, .right { text-anchor: end; }
.axis { text-anchor: middle; font-weight: 700; }
.bold { font-weight: 700; }

.vscroll { flex: none; width: 9px; padding: 5px 2px; background: #cdcdcd; border-top: 2px solid #777; }
.vscroll span { display: block; height: 48%; border-radius: 3px; background: #7c7d7c; }
.hscroll { flex: none; height: 10px; margin-right: 10px; padding: 2px; background: #cdcdcd; border-right: 2px solid #555; }
.hscroll span { display: block; width: 46.6%; height: 6px; border-radius: 3px; background: #7c7d7c; }

.tabs { display: flex; flex: none; align-items: stretch; height: 15px; font-size: 8px; }
.tab-nav { flex: none; width: 62px; height: 14px; margin: 1px 10px 0 5px; }
.add svg { width: 14px; height: 14px; }
.tabs button { padding: 0 9px; border-right: 1px solid #d6d4d2; }
.tabs .add { padding: 0; width: 14px; border: 0; }
.tabs .current { background: #fff; font-weight: 700; border-right: 0; border-bottom: 2px solid #888; }

.sidebar { position: relative; flex: none; width: 39px; border-left: 1px solid #d6d4d2; }
.sidebar button { width: 100%; height: 29px; }
.sidebar .handle { position: absolute; left: -1px; top: 268px; width: 5px; height: 50px; background: #979797; }
.handle::after { content: ""; border: 2px solid transparent; border-left: 3px solid #fff; border-right: 0; }

.status { display: grid; flex: none; height: 18px; grid-template-columns: 180fr 222fr 201fr 170fr 45fr 30fr 20fr 20fr 184fr 96fr 32fr; border-top: 1px solid #d2d0ce; font-size: 8px; }
.status > div { display: flex; align-items: center; padding-left: 6px; border-right: 1px solid #e0dedc; white-space: nowrap; min-width: 0; }
.status > div:last-child { border: 0; }
.status .mid { justify-content: center; padding: 0; }
.saved { width: 11px; height: 11px; margin-right: 10px; }
.mode svg { width: 20px; height: 12px; }
.status .zoom { padding: 0 3px; gap: 2px; }
.zoom button { flex: none; width: 12px; font-size: 13px; font-weight: 700; }
.zoom input { flex: 1; height: 10px; appearance: none; }
.zoom input::-webkit-slider-runnable-track { height: 1px; background: #777; }
.zoom input::-webkit-slider-thumb { appearance: none; width: 3px; height: 7px; margin-top: -3px; background: #fff; border: 1px solid #444; }
```
